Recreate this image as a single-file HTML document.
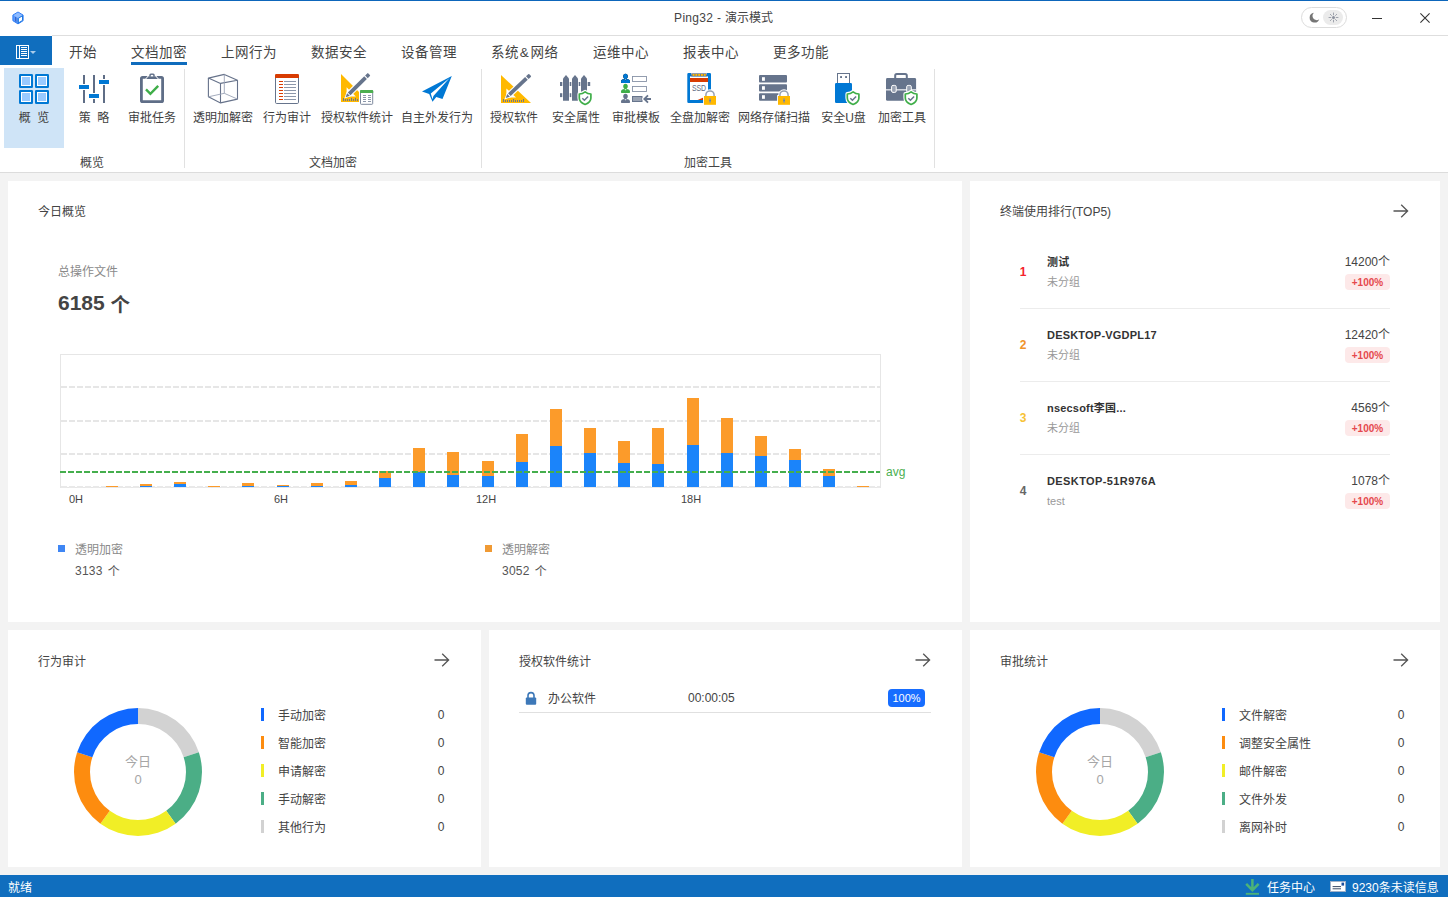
<!DOCTYPE html>
<html lang="zh-CN">
<head>
<meta charset="utf-8">
<title>Ping32 - 演示模式</title>
<style>
*{box-sizing:border-box;margin:0;padding:0}
html,body{width:1448px;height:897px;overflow:hidden}
body{position:relative;background:#f3f3f3;font-family:"Liberation Sans","Noto Sans CJK SC",sans-serif;font-size:12px;color:#444;line-height:16px}
.abs{position:absolute}
.t{position:absolute;white-space:nowrap;line-height:16px;height:16px;margin-top:1px}
.c{text-align:center}
.r{text-align:right}
#titlebar{position:absolute;left:0;top:0;width:1448px;height:36px;background:#fff;border-top:1px solid #0d66bb;border-bottom:1px solid #dedede}
#ribbon{position:absolute;left:0;top:36px;width:1448px;height:137px;background:#fff;border-bottom:1px solid #dcdcdc}
#filebtn{position:absolute;left:0;top:36px;width:52px;height:29px;background:#106ebe}
.tab{position:absolute;top:44px;font-size:13.5px;letter-spacing:0.5px;line-height:18px;height:18px;white-space:nowrap;color:#444}
.sep{position:absolute;top:69px;width:1px;height:99px;background:#e1e1e1}
.rl{position:absolute;top:110px;line-height:16px;height:16px;white-space:nowrap;color:#3f3f3f;text-align:center;width:90px}
.gl{position:absolute;top:155px;line-height:16px;height:16px;white-space:nowrap;color:#444;text-align:center;width:90px}
.ico{position:absolute;overflow:visible}
.panel{position:absolute;background:#fff}
.ph{position:absolute;top:22px;left:30px;line-height:16px;white-space:nowrap;color:#444}
.arrow{position:absolute;top:23px;width:15px;height:14px}
.gray{color:#8a8a8a}
#status{position:absolute;left:0;top:875px;width:1448px;height:22px;background:#106ebe;color:#fff}
.lg{position:absolute;width:3px;height:13px}
.ll{position:absolute;margin-top:2px;line-height:16px;white-space:nowrap;color:#444}
.lv{position:absolute;margin-top:1px;line-height:16px;white-space:nowrap;color:#444;width:20px;text-align:center}
.rank{position:absolute;margin-top:1px;font-weight:bold;font-size:12px;line-height:16px;width:10px;text-align:center}
.nm{position:absolute;font-weight:bold;font-size:11px;letter-spacing:0.2px;line-height:14px;white-space:nowrap;color:#333}
.grp{position:absolute;font-size:11px;line-height:14px;white-space:nowrap;color:#999}
.cnt{position:absolute;margin-top:1px;font-size:12px;line-height:16px;white-space:nowrap;color:#444;text-align:right;width:80px}
.bdg{position:absolute;width:45px;height:16px;border-radius:4px;background:#fde9e9;color:#e5484d;font-weight:bold;font-size:10px;line-height:18px;overflow:hidden;text-align:center}
.hr{position:absolute;height:1px;background:#ececec}
</style>
</head>
<body>
<div id="titlebar"></div>
<!-- app icon -->
<svg class="ico" style="left:12px;top:11px" width="12" height="14" viewBox="12 11 12 14">
<path d="M18 12L23.1 15.1V20.7L18 23.9L12.9 20.7V15.1Z" fill="#5b9bff" stroke="#2f7df6" stroke-width="1" stroke-linejoin="round"/>
<path d="M18 12.6L22.4 15.2L18 18L13.6 15.2Z" fill="#8fbcff"/>
<path d="M18.4 18.3L22.5 15.8V20.4L18.4 23Z" fill="#fff" stroke="#0f6fdd" stroke-width="0.9" stroke-linejoin="round"/>
<path d="M15.6 17V21.4" stroke="#3d62c4" stroke-width="1.1"/>
<path d="M17 18V22.4" stroke="#3f7fd8" stroke-width="0.9"/>
</svg>
<div class="t r" style="left:573px;top:9px;width:200px;color:#444"><span style="letter-spacing:0.32px">Ping32 - </span>演示模式</div>
<!-- theme toggle -->
<div class="abs" style="left:1301px;top:7px;width:46px;height:21px;border:1px solid #dcdcdc;border-radius:11px;background:#fff"></div>
<div class="abs" style="left:1323px;top:10px;width:20px;height:15px;border-radius:8px;background:#ebebeb"></div>
<svg class="ico" style="left:1309px;top:12px" width="11" height="11" viewBox="0 0 11 11">
<path d="M5 0.8A4.9 4.9 0 1 0 10.2 7.2A4 4 0 0 1 5 0.8Z" fill="#757575"/>
</svg>
<svg class="ico" style="left:1328px;top:12px" width="11" height="11" viewBox="0 0 11 11">
<circle cx="5.5" cy="5.5" r="1.5" fill="#8a8f9c"/>
<g stroke="#8a8f9c" stroke-width="0.8" stroke-linecap="round">
<path d="M5.5 1V2.8M5.5 8.2V10M1 5.5H2.8M8.2 5.5H10M2.3 2.3L3.5 3.5M7.5 7.5L8.7 8.7M2.3 8.7L3.5 7.5M7.5 3.5L8.7 2.3"/>
</g>
</svg>
<!-- window controls -->
<div class="abs" style="left:1372px;top:18px;width:10px;height:1px;background:#333"></div>
<svg class="ico" style="left:1420px;top:13px" width="10" height="10" viewBox="0 0 10 10">
<path d="M0.4 0.4L9.6 9.6M9.6 0.4L0.4 9.6" stroke="#333" stroke-width="1.1"/>
</svg>
<div id="ribbon"></div>
<div id="filebtn"></div>
<div class="abs" style="left:0;top:35px;width:52px;height:1px;background:#fff"></div>
<svg class="ico" style="left:15px;top:44px" width="22" height="16" viewBox="15 44 22 16">
<g shape-rendering="crispEdges" fill="#fff">
<rect x="16" y="45" width="13" height="1"/><rect x="16" y="58" width="13" height="1"/><rect x="16" y="45" width="1" height="14"/><rect x="28" y="45" width="1" height="14"/>
<rect x="19" y="45" width="1" height="14"/>
<rect x="21" y="47" width="6" height="1"/><rect x="21" y="49" width="6" height="1"/><rect x="21" y="51" width="6" height="1"/><rect x="21" y="53" width="6" height="1"/><rect x="21" y="55" width="6" height="1"/>
</g>
<path d="M30 51H36L33 54Z" fill="#a9cbea"/>
</svg>
<div class="tab" style="left:69px">开始</div>
<div class="tab" style="left:131px">文档加密</div>
<div class="abs" style="left:131px;top:62px;width:56px;height:3px;background:#0f6cbd"></div>
<div class="tab" style="left:221px">上网行为</div>
<div class="tab" style="left:311px">数据安全</div>
<div class="tab" style="left:401px">设备管理</div>
<div class="tab" style="left:491px">系统<span style="margin:0 1.3px 0 0.8px">&amp;</span>网络</div>
<div class="tab" style="left:593px">运维中心</div>
<div class="tab" style="left:683px">报表中心</div>
<div class="tab" style="left:773px">更多功能</div>
<div class="abs" style="left:4px;top:68px;width:60px;height:80px;background:#cfe4f7"></div>
<div class="sep" style="left:184px"></div>
<div class="sep" style="left:481px"></div>
<div class="sep" style="left:934px"></div>
<div class="rl" style="left:-11px">概&nbsp;&nbsp;览</div>
<div class="rl" style="left:49px">策&nbsp;&nbsp;略</div>
<div class="rl" style="left:107px">审批任务</div>
<div class="rl" style="left:178px">透明加解密</div>
<div class="rl" style="left:242px">行为审计</div>
<div class="rl" style="left:312px">授权软件统计</div>
<div class="rl" style="left:392px">自主外发行为</div>
<div class="rl" style="left:469px">授权软件</div>
<div class="rl" style="left:531px">安全属性</div>
<div class="rl" style="left:591px">审批模板</div>
<div class="rl" style="left:655px">全盘加解密</div>
<div class="rl" style="left:729px">网络存储扫描</div>
<div class="rl" style="left:798.5px">安全U盘</div>
<div class="rl" style="left:857px">加密工具</div>
<div class="gl" style="left:47px">概览</div>
<div class="gl" style="left:288px">文档加密</div>
<div class="gl" style="left:663px">加密工具</div>
<svg class="ico" style="left:0;top:0" width="1448" height="180" viewBox="0 0 1448 180">
<defs>
<g id="shield">
<path d="M7 0.7C5.4 2.1 3.2 2.9 1.1 3V7.2C1.1 10.4 3.8 12.6 7 13.8C10.2 12.6 12.9 10.4 12.9 7.2V3C10.8 2.9 8.6 2.1 7 0.7Z" fill="#fff" stroke="#fff" stroke-width="3.6" stroke-linejoin="round"/>
<path d="M7 0.9C5.4 2.2 3.2 3 1.2 3.1V7.2C1.2 10.3 3.9 12.5 7 13.6C10.1 12.5 12.8 10.3 12.8 7.2V3.1C10.8 3 8.6 2.2 7 0.9Z" fill="#fff" stroke="#3fae49" stroke-width="1.7" stroke-linejoin="round"/>
<path d="M4.2 7.3L6.3 9.3L10 5.5" fill="none" stroke="#66748c" stroke-width="1.5"/>
</g>
<g id="lock">
<path d="M1.9 7V5A4.1 4.1 0 0 1 10.1 5V7Z" fill="#fff" stroke="#fff" stroke-width="3.4"/>
<rect x="-0.9" y="5.1" width="13.8" height="10.6" fill="#fff"/>
<path d="M1.9 7V5A4.1 4.1 0 0 1 10.1 5V7" fill="#fff" stroke="#98a2b3" stroke-width="1.5"/>
<rect x="0" y="6" width="12" height="8.8" fill="#ffb900"/>
<rect x="5.3" y="8.4" width="1.5" height="4.2" fill="#8a8fa6"/>
<rect x="5.6" y="10" width="0.9" height="1.1" fill="#2a6fd0"/>
</g>
</defs>

<!-- 概览 grid -->
<g>
<rect x="20" y="75" width="12" height="12" fill="#fff" stroke="#0078d4" stroke-width="2" rx="0.2"/><rect x="22" y="77" width="8" height="8" fill="#99caff"/>
<rect x="36" y="75" width="12" height="12" fill="#fff" stroke="#0078d4" stroke-width="2" rx="0.2"/><rect x="38" y="77" width="8" height="8" fill="#99caff"/>
<rect x="20" y="91" width="12" height="12" fill="#fff" stroke="#0078d4" stroke-width="2" rx="0.2"/><rect x="22" y="93" width="8" height="8" fill="#99caff"/>
<rect x="36" y="91" width="12" height="12" fill="#fff" stroke="#0078d4" stroke-width="2" rx="0.2"/><rect x="38" y="93" width="8" height="8" fill="#99caff"/>
</g>

<!-- 策略 sliders -->
<g shape-rendering="crispEdges">
<rect x="83" y="75" width="2" height="9" fill="#5f6d86"/><rect x="83" y="90" width="2" height="13" fill="#5f6d86"/>
<rect x="93" y="75" width="2" height="18" fill="#5f6d86"/><rect x="93" y="99" width="2" height="4" fill="#5f6d86"/>
<rect x="103" y="75" width="2" height="4" fill="#5f6d86"/><rect x="103" y="85" width="2" height="18" fill="#5f6d86"/>
<rect x="79" y="85" width="10" height="4" fill="#0078d4"/>
<rect x="89" y="94" width="10" height="4" fill="#0078d4"/>
<rect x="99" y="80" width="10" height="4" fill="#0078d4"/>
</g>

<!-- 审批任务 clipboard -->
<g>
<rect x="141.4" y="77.4" width="21.2" height="24.2" rx="1.2" fill="#fff" stroke="#5f6e87" stroke-width="2.8"/>
<path d="M145 79.2L148 75.6H156L159 79.2Z" fill="#fff"/>
<path d="M146.1 78.9L148.6 76.2H155.4L157.9 78.9Z" fill="#5f6e87"/>
<path d="M149.3 76.6V75.1a1.5 1.5 0 0 1 1.5-1.5h2.4a1.5 1.5 0 0 1 1.5 1.5V76.6Z" fill="#5f6e87"/>
<rect x="150.8" y="74.9" width="2.4" height="1.5" fill="#fff"/>
<path d="M146 89.4L150.4 93.8L158.2 85.9" fill="none" stroke="#3fae49" stroke-width="2.4"/>
</g>

<!-- 透明加解密 cube -->
<g fill="none" stroke="#66728a" stroke-width="1.1" stroke-linejoin="round">
<path d="M224.3 74.4L208.4 78.1L220.5 83.4L237.5 80.3Z"/>
<path d="M208.4 78.1V96.8L220.5 102.9L237.5 99.1V80.3"/>
<path d="M220.5 83.4V102.9"/>
<path d="M224.3 74.4V93.3M208.4 96.8L224.3 93.3L237.5 99.1" stroke="#9aa3b5" stroke-width="0.9"/>
</g>

<!-- 行为审计 doc -->
<g>
<rect x="275.5" y="74.5" width="23" height="29" rx="1.2" fill="#fff" stroke="#66748c" stroke-width="1"/>
<path d="M275 75.4a1.4 1.4 0 0 1 1.4-1.4h21.2a1.4 1.4 0 0 1 1.4 1.4V78H275Z" fill="#d83b01"/>
<g shape-rendering="crispEdges">
<path d="M278.5 81.5h4M278.5 84.5h4M278.5 87.5h4M278.5 90.5h4M278.5 93.5h4M278.5 96.5h4M278.5 99.5h4" stroke="#d83b01" stroke-width="1"/>
<path d="M284 81.5h11.5M284 84.5h11.5M284 87.5h11.5M284 90.5h11.5M284 93.5h11.5M284 96.5h11.5M284 99.5h11.5" stroke="#8c97aa" stroke-width="1"/>
</g>
</g>

<!-- 授权软件统计 -->
<g>
<path d="M341 74V102H369Z" fill="#ffb900"/>
<path d="M346.6 87.2V96.4H355.8Z" fill="#fff"/>
<g fill="#6d7890" shape-rendering="crispEdges"><rect x="343" y="98" width="1" height="3"/><rect x="345" y="99" width="1" height="2"/><rect x="347" y="99" width="1" height="2"/><rect x="349" y="99" width="1" height="2"/><rect x="351" y="98" width="1" height="3"/><rect x="353" y="99" width="1" height="2"/><rect x="355" y="98" width="1" height="3"/><rect x="357" y="99" width="1" height="2"/></g>
<g transform="translate(345.6 97.3) rotate(-44.5)">
<path d="M0 0L4.6 -2.2H32.6V2.2H4.6Z" fill="#fff" stroke="#fff" stroke-width="1.6"/>
<path d="M0 0L4 -1.9L4 1.9Z" fill="#66748c"/>
<path d="M5 -1.9H28V1.9H5Z" fill="#66748c"/>
<path d="M29.2 -1.9H32.2a0.8 0.8 0 0 1 0.8 0.8V1.1a0.8 0.8 0 0 1 -0.8 0.8H29.2Z" fill="#66748c"/>
</g>
<rect x="359" y="89" width="15.2" height="16.8" fill="#fff"/>
<rect x="360.5" y="90.5" width="12.2" height="13.8" rx="0.8" fill="#fff" stroke="#7d899d" stroke-width="1"/>
<path d="M360 91a1 1 0 0 1 1-1h11.2a1 1 0 0 1 1 1V93H360Z" fill="#4caf50"/>
<g shape-rendering="crispEdges"><path d="M363 95.5h3M367.5 95.5h3M363 97.5h3M367.5 97.5h3M363 99.5h3M367.5 99.5h3M363 101.5h3M367.5 101.5h3" stroke="#8c97aa" stroke-width="1"/></g>
</g>

<!-- 自主外发行为 plane -->
<path fill="#0078d4" fill-rule="evenodd" d="M451.8 76.1L422 91.5L429.2 93.9L432.5 101.7L436.3 97.1L442.5 98.9ZM430.8 93.6L449.6 78.1L433.4 96L432.5 99.3Z"/>

<!-- 授权软件 -->
<g>
<path d="M501 75V103H531Z" fill="#ffb900"/>
<path d="M506.4 88.4V97.6H516Z" fill="#fff"/>
<g fill="#6d7890" shape-rendering="crispEdges"><rect x="503" y="99" width="1" height="3"/><rect x="505" y="100" width="1" height="2"/><rect x="507" y="100" width="1" height="2"/><rect x="509" y="100" width="1" height="2"/><rect x="511" y="100" width="1" height="2"/><rect x="513" y="99" width="1" height="3"/><rect x="515" y="100" width="1" height="2"/><rect x="517" y="100" width="1" height="2"/><rect x="519" y="100" width="1" height="2"/><rect x="521" y="100" width="1" height="2"/><rect x="523" y="99" width="1" height="3"/></g>
<g transform="translate(505.7 98.1) rotate(-43.5)">
<path d="M0 0L4.6 -2.2H33.4V2.2H4.6Z" fill="#fff" stroke="#fff" stroke-width="1.6"/>
<path d="M0 0L4 -1.9L4 1.9Z" fill="#66748c"/>
<path d="M5 -1.9H28.6V1.9H5Z" fill="#66748c"/>
<path d="M29.8 -1.9H32.8a0.8 0.8 0 0 1 0.8 0.8V1.1a0.8 0.8 0 0 1 -0.8 0.8H29.8Z" fill="#66748c"/>
</g>
</g>

<!-- 安全属性 fence -->
<g fill="#66748c">
<rect x="560" y="82" width="2.3" height="4"/><rect x="569.7" y="82" width="1.6" height="4"/><rect x="578.7" y="82" width="1.6" height="4"/><rect x="587.7" y="82" width="2.5" height="4"/>
<rect x="560" y="93.2" width="2.3" height="3.9"/><rect x="569.7" y="93.2" width="1.6" height="3.9"/><rect x="578.7" y="93.2" width="1.6" height="3.9"/><rect x="587.7" y="93.2" width="2.5" height="3.9"/>
<path d="M563 78.4L566 74.9L569 78.4V100.8H563Z"/>
<path d="M572 78.4L575 74.9L578 78.4V100.8H572Z"/>
<path d="M581 78.4L584 74.9L587 78.4V100.8H581Z"/>
</g>
<use href="#shield" x="578.1" y="90.9"/>

<!-- 审批模板 -->
<g>
<g id="person">
<path d="M625.5 73.8c1.4 0 2.3 1 2.3 2.4c0 1.1 -0.5 2 -1.1 2.5v0.6h-2.4v-0.6c-0.6 -0.5 -1.1 -1.4 -1.1 -2.5c0 -1.4 0.9 -2.4 2.3 -2.4Z"/>
<path d="M621 82.2V81.4C621 79.8 622.4 79.2 624.4 78.9L625.5 80.4L626.6 78.9C628.6 79.2 630 79.8 630 81.4V82.2a0.7 0.7 0 0 1 -0.7 0.7H621.7a0.7 0.7 0 0 1 -0.7 -0.7Z"/>
</g>
</g>
<use href="#person" fill="#0078d4"/>
<use href="#person" y="10" fill="#3fae49"/>
<use href="#person" y="20" fill="#66748c"/>
<rect x="632.5" y="76.5" width="14" height="5" fill="#fff" stroke="#8893a7" stroke-width="0.9"/>
<rect x="632.5" y="86.5" width="14" height="5" fill="#fff" stroke="#8893a7" stroke-width="0.9"/>
<rect x="632.5" y="96.5" width="9.5" height="5" fill="#9aa3b3" stroke="#66748c" stroke-width="1"/>
<path d="M644.4 99H651M648 95.4L644.3 99L648 102.6" fill="none" stroke="#fff" stroke-width="3.6"/><path d="M644.4 99H651M648 95.4L644.3 99L648 102.6" fill="none" stroke="#66748c" stroke-width="1.8"/>

<!-- 全盘加解密 SSD -->
<g>
<path d="M687.3 74.2a1.2 1.2 0 0 1 1.2 -1.2H691V75H707V73H709.8a1.2 1.2 0 0 1 1.2 1.2V101.7a1.2 1.2 0 0 1 -1.2 1.2H688.5a1.2 1.2 0 0 1 -1.2 -1.2Z" fill="#0078d4"/>
<rect x="690" y="76.4" width="18" height="23.6" fill="#fff"/>
<rect x="691.2" y="73.3" width="15.6" height="3.1" fill="#66748c"/>
<g fill="#ffb900"><rect x="692.6" y="74" width="1.9" height="1.9"/><rect x="695.4" y="74" width="1.9" height="1.9"/><rect x="698.2" y="74" width="1.9" height="1.9"/><rect x="701" y="74" width="1.9" height="1.9"/><rect x="703.8" y="74" width="1.9" height="1.9"/></g>
<rect x="690" y="78" width="18" height="4" fill="#d83b01"/>
<path d="M697.6 100L703.4 97.4V100Z" fill="#d83b01"/>
<text x="699" y="90.9" font-family="'Liberation Sans',sans-serif" font-size="8.2" text-anchor="middle" fill="#5d6a82" textLength="14.2" lengthAdjust="spacingAndGlyphs">SSD</text>
</g>
<use href="#lock" x="704" y="90"/>

<!-- 网络存储扫描 server -->
<g fill="#66748c">
<rect x="759" y="75.1" width="28" height="7.5" rx="1"/>
<rect x="759" y="84.2" width="28" height="7.4" rx="1"/>
<rect x="759" y="93.2" width="28" height="7.6" rx="1"/>
<g fill="#fff"><rect x="762" y="77.2" width="2.9" height="3.6"/><rect x="762" y="86.2" width="2.9" height="3.6"/><rect x="762" y="95.2" width="2.9" height="3.6"/></g>
</g>
<use href="#lock" x="778" y="90"/>

<!-- 安全U盘 -->
<g>
<rect x="837.5" y="73.5" width="12" height="10" fill="#fff" stroke="#66748c" stroke-width="1"/>
<rect x="840.1" y="76.1" width="1.9" height="1.9" fill="#66748c"/><rect x="845.1" y="76.1" width="1.9" height="1.9" fill="#66748c"/>
<rect x="835" y="83" width="17" height="19.9" rx="1.2" fill="#0078d4"/>
</g>
<use href="#shield" x="846.1" y="90.9"/>

<!-- 加密工具 briefcase -->
<g>
<rect x="895.2" y="74" width="11.6" height="6" rx="1.6" fill="none" stroke="#66748c" stroke-width="2"/>
<rect x="886" y="78" width="30.1" height="22.8" rx="1.4" fill="#66748c"/>
<rect x="886" y="89.3" width="30.1" height="1.1" fill="#fff"/>
<rect x="891.6" y="85.4" width="4.6" height="7" rx="1.4" fill="#9aa3b3" stroke="#fff" stroke-width="1"/>
<rect x="906.7" y="85.4" width="4.6" height="7" rx="1.4" fill="#9aa3b3" stroke="#fff" stroke-width="1"/>
</g>
<use href="#shield" x="904.1" y="90.9"/>
</svg>
<!-- Panel A -->
<div class="panel" style="left:8px;top:181px;width:954px;height:441px">
<svg class="ico" style="left:0;top:0" width="954" height="441" viewBox="8 181 954 441" shape-rendering="crispEdges">
<rect x="60.5" y="354.5" width="820" height="133" fill="none" stroke="#e6e6e6" stroke-width="1"/>
<line x1="61" x2="880" y1="387" y2="387" stroke="#e6e6e6" stroke-width="2" stroke-dasharray="6 2"/>
<line x1="61" x2="880" y1="421" y2="421" stroke="#e6e6e6" stroke-width="2" stroke-dasharray="6 2"/>
<line x1="61" x2="880" y1="454" y2="454" stroke="#e6e6e6" stroke-width="2" stroke-dasharray="6 2"/>
<line x1="61" x2="880" y1="487" y2="487" stroke="#e9e9e9" stroke-width="2" stroke-dasharray="6 2"/>
<rect x="106" y="486" width="12" height="1" fill="#fc9b2a"/>
<rect x="140" y="486" width="12" height="1" fill="#1b84fa"/>
<rect x="140" y="484" width="12" height="2" fill="#fc9b2a"/>
<rect x="174" y="484" width="12" height="3" fill="#1b84fa"/>
<rect x="174" y="482" width="12" height="2" fill="#fc9b2a"/>
<rect x="208" y="486" width="12" height="1" fill="#fc9b2a"/>
<rect x="242" y="486" width="12" height="1" fill="#1b84fa"/>
<rect x="242" y="483" width="12" height="3" fill="#fc9b2a"/>
<rect x="277" y="486" width="12" height="1" fill="#1b84fa"/>
<rect x="277" y="485" width="12" height="1" fill="#fc9b2a"/>
<rect x="311" y="486" width="12" height="1" fill="#1b84fa"/>
<rect x="311" y="483" width="12" height="3" fill="#fc9b2a"/>
<rect x="345" y="485" width="12" height="2" fill="#1b84fa"/>
<rect x="345" y="481" width="12" height="4" fill="#fc9b2a"/>
<rect x="379" y="478" width="12" height="9" fill="#1b84fa"/>
<rect x="379" y="471" width="12" height="7" fill="#fc9b2a"/>
<rect x="413" y="472" width="12" height="15" fill="#1b84fa"/>
<rect x="413" y="448" width="12" height="24" fill="#fc9b2a"/>
<rect x="447" y="475" width="12" height="12" fill="#1b84fa"/>
<rect x="447" y="452" width="12" height="23" fill="#fc9b2a"/>
<rect x="482" y="476" width="12" height="11" fill="#1b84fa"/>
<rect x="482" y="461" width="12" height="15" fill="#fc9b2a"/>
<rect x="516" y="462" width="12" height="25" fill="#1b84fa"/>
<rect x="516" y="434" width="12" height="28" fill="#fc9b2a"/>
<rect x="550" y="446" width="12" height="41" fill="#1b84fa"/>
<rect x="550" y="409" width="12" height="37" fill="#fc9b2a"/>
<rect x="584" y="453" width="12" height="34" fill="#1b84fa"/>
<rect x="584" y="428" width="12" height="25" fill="#fc9b2a"/>
<rect x="618" y="463" width="12" height="24" fill="#1b84fa"/>
<rect x="618" y="441" width="12" height="22" fill="#fc9b2a"/>
<rect x="652" y="464" width="12" height="23" fill="#1b84fa"/>
<rect x="652" y="428" width="12" height="36" fill="#fc9b2a"/>
<rect x="687" y="445" width="12" height="42" fill="#1b84fa"/>
<rect x="687" y="398" width="12" height="47" fill="#fc9b2a"/>
<rect x="721" y="453" width="12" height="34" fill="#1b84fa"/>
<rect x="721" y="418" width="12" height="35" fill="#fc9b2a"/>
<rect x="755" y="456" width="12" height="31" fill="#1b84fa"/>
<rect x="755" y="436" width="12" height="20" fill="#fc9b2a"/>
<rect x="789" y="460" width="12" height="27" fill="#1b84fa"/>
<rect x="789" y="449" width="12" height="11" fill="#fc9b2a"/>
<rect x="823" y="476" width="12" height="11" fill="#1b84fa"/>
<rect x="823" y="469" width="12" height="7" fill="#fc9b2a"/>
<rect x="857" y="486" width="12" height="1" fill="#fc9b2a"/>
<line x1="60" x2="880" y1="472" y2="472" stroke="#45ae4d" stroke-width="2" stroke-dasharray="6 2"/>
</svg>
</div>
<div class="t" style="left:38px;top:203px">今日概览</div>
<div class="t gray" style="left:58px;top:263px">总操作文件</div>
<div class="t" style="left:58px;top:289px;font-size:21px;font-weight:bold;line-height:26px;height:26px;color:#444">6185 <span style="position:relative;top:2px;font-size:19.5px">个</span></div>
<div class="t c" style="left:56px;top:490px;width:40px;font-size:11px;color:#444">0H</div>
<div class="t c" style="left:261px;top:490px;width:40px;font-size:11px;color:#444">6H</div>
<div class="t c" style="left:466px;top:490px;width:40px;font-size:11px;color:#444">12H</div>
<div class="t c" style="left:671px;top:490px;width:40px;font-size:11px;color:#444">18H</div>
<div class="t" style="left:886px;top:463px;color:#4caf50">avg</div>
<div class="abs" style="left:58px;top:545px;width:7px;height:7px;background:#3f86f4"></div>
<div class="t gray" style="left:75px;top:541px">透明加密</div>
<div class="t" style="left:75px;top:562px;color:#555;letter-spacing:0.25px;word-spacing:1.5px">3133 <span style="position:relative;top:1px">个</span></div>
<div class="abs" style="left:485px;top:545px;width:7px;height:7px;background:#f09a34"></div>
<div class="t gray" style="left:502px;top:541px">透明解密</div>
<div class="t" style="left:502px;top:562px;color:#555;letter-spacing:0.25px;word-spacing:1.5px">3052 <span style="position:relative;top:1px">个</span></div>
<!-- Panel B -->
<div class="panel" style="left:970px;top:181px;width:470px;height:441px"></div>
<div class="t" style="left:1000px;top:203px">终端使用排行(TOP5)</div>
<svg class="ico" style="left:1393px;top:204px" width="16" height="14" viewBox="0 0 16 14"><path d="M0.5 7H14.5M8.2 0.8L14.6 7L8.2 13.2" fill="none" stroke="#555" stroke-width="1.3"/></svg>

<div class="rank" style="left:1018px;top:263px;color:#f5222d">1</div>
<div class="nm" style="left:1047px;top:255px">测试</div>
<div class="grp" style="left:1047px;top:275px">未分组</div>
<div class="cnt" style="left:1310px;top:253px">14200个</div>
<div class="bdg" style="left:1345px;top:274px">+100%</div>
<div class="hr" style="left:1020px;top:308px;width:370px"></div>

<div class="rank" style="left:1018px;top:336px;color:#f0932b">2</div>
<div class="nm" style="left:1047px;top:328px">DESKTOP-VGDPL17</div>
<div class="grp" style="left:1047px;top:348px">未分组</div>
<div class="cnt" style="left:1310px;top:326px">12420个</div>
<div class="bdg" style="left:1345px;top:347px">+100%</div>
<div class="hr" style="left:1020px;top:381px;width:370px"></div>

<div class="rank" style="left:1018px;top:409px;color:#f7c236">3</div>
<div class="nm" style="left:1047px;top:401px">nsecsoft李国...</div>
<div class="grp" style="left:1047px;top:421px">未分组</div>
<div class="cnt" style="left:1310px;top:399px">4569个</div>
<div class="bdg" style="left:1345px;top:420px">+100%</div>
<div class="hr" style="left:1020px;top:454px;width:370px"></div>

<div class="rank" style="left:1018px;top:482px;color:#666">4</div>
<div class="nm" style="left:1047px;top:474px;letter-spacing:0.4px">DESKTOP-51R976A</div>
<div class="grp" style="left:1047px;top:494px">test</div>
<div class="cnt" style="left:1310px;top:472px">1078个</div>
<div class="bdg" style="left:1345px;top:493px">+100%</div>
<!-- Panel C -->
<div class="panel" style="left:8px;top:630px;width:473px;height:237px"></div>
<div class="t" style="left:38px;top:653px">行为审计</div>
<svg class="ico" style="left:434px;top:653px" width="16" height="14" viewBox="0 0 16 14"><path d="M0.5 7H14.5M8.2 0.8L14.6 7L8.2 13.2" fill="none" stroke="#555" stroke-width="1.3"/></svg>
<svg class="ico" style="left:72.7px;top:706.6px" width="130" height="130" viewBox="-65 -65 130 130">
<path d="M0.00 -64.00A64 64 0 0 1 60.87 -19.78L45.65 -14.83A48 48 0 0 0 0.00 -48.00Z" fill="#d2d2d2"/>
<path d="M60.87 -19.78A64 64 0 0 1 37.62 51.78L28.21 38.83A48 48 0 0 0 45.65 -14.83Z" fill="#4bae86"/>
<path d="M37.62 51.78A64 64 0 0 1 -37.62 51.78L-28.21 38.83A48 48 0 0 0 28.21 38.83Z" fill="#f1ee26"/>
<path d="M-37.62 51.78A64 64 0 0 1 -60.87 -19.78L-45.65 -14.83A48 48 0 0 0 -28.21 38.83Z" fill="#fd8c0f"/>
<path d="M-60.87 -19.78A64 64 0 0 1 -0.00 -64.00L-0.00 -48.00A48 48 0 0 0 -45.65 -14.83Z" fill="#1068ff"/>
</svg>
<div class="t c" style="left:108px;top:753px;width:60px;font-size:13px;color:#a6a6a6">今日</div>
<div class="t c" style="left:108px;top:771px;width:60px;font-size:13px;color:#a6a6a6">0</div>
<div class="lg" style="left:261px;top:708px;background:#1068ff"></div><div class="ll" style="left:278px;top:706px">手动加密</div><div class="lv" style="left:431px;top:706px">0</div>
<div class="lg" style="left:261px;top:736px;background:#fd8c0f"></div><div class="ll" style="left:278px;top:734px">智能加密</div><div class="lv" style="left:431px;top:734px">0</div>
<div class="lg" style="left:261px;top:764px;background:#f1ee26"></div><div class="ll" style="left:278px;top:762px">申请解密</div><div class="lv" style="left:431px;top:762px">0</div>
<div class="lg" style="left:261px;top:792px;background:#4bae86"></div><div class="ll" style="left:278px;top:790px">手动解密</div><div class="lv" style="left:431px;top:790px">0</div>
<div class="lg" style="left:261px;top:820px;background:#d2d2d2"></div><div class="ll" style="left:278px;top:818px">其他行为</div><div class="lv" style="left:431px;top:818px">0</div>

<!-- Panel D -->
<div class="panel" style="left:489px;top:630px;width:473px;height:237px"></div>
<div class="t" style="left:519px;top:653px">授权软件统计</div>
<svg class="ico" style="left:915px;top:653px" width="16" height="14" viewBox="0 0 16 14"><path d="M0.5 7H14.5M8.2 0.8L14.6 7L8.2 13.2" fill="none" stroke="#555" stroke-width="1.3"/></svg>
<svg class="ico" style="left:525px;top:691px" width="12" height="14" viewBox="0 0 12 14">
<path d="M3 7V4.6A3 3 0 0 1 9 4.6V7" fill="none" stroke="#3d78b8" stroke-width="1.6"/>
<rect x="0.8" y="6.6" width="10.4" height="7.2" rx="1" fill="#3d78b8"/>
</svg>
<div class="t" style="left:548px;top:690px">办公软件</div>
<div class="t" style="left:688px;top:689px">00:00:05</div>
<div class="abs c" style="left:888px;top:689px;width:37px;height:18px;border-radius:4px;background:#176dff;color:#fff;font-size:11px;line-height:18px">100%</div>
<div class="hr" style="left:519px;top:712px;width:412px;background:#e0e0e0"></div>

<!-- Panel E -->
<div class="panel" style="left:970px;top:630px;width:470px;height:237px"></div>
<div class="t" style="left:1000px;top:653px">审批统计</div>
<svg class="ico" style="left:1393px;top:653px" width="16" height="14" viewBox="0 0 16 14"><path d="M0.5 7H14.5M8.2 0.8L14.6 7L8.2 13.2" fill="none" stroke="#555" stroke-width="1.3"/></svg>
<svg class="ico" style="left:1035.4px;top:706.6px" width="130" height="130" viewBox="-65 -65 130 130">
<path d="M0.00 -64.00A64 64 0 0 1 60.87 -19.78L45.65 -14.83A48 48 0 0 0 0.00 -48.00Z" fill="#d2d2d2"/>
<path d="M60.87 -19.78A64 64 0 0 1 37.62 51.78L28.21 38.83A48 48 0 0 0 45.65 -14.83Z" fill="#4bae86"/>
<path d="M37.62 51.78A64 64 0 0 1 -37.62 51.78L-28.21 38.83A48 48 0 0 0 28.21 38.83Z" fill="#f1ee26"/>
<path d="M-37.62 51.78A64 64 0 0 1 -60.87 -19.78L-45.65 -14.83A48 48 0 0 0 -28.21 38.83Z" fill="#fd8c0f"/>
<path d="M-60.87 -19.78A64 64 0 0 1 -0.00 -64.00L-0.00 -48.00A48 48 0 0 0 -45.65 -14.83Z" fill="#1068ff"/>
</svg>
<div class="t c" style="left:1070px;top:753px;width:60px;font-size:13px;color:#a6a6a6">今日</div>
<div class="t c" style="left:1070px;top:771px;width:60px;font-size:13px;color:#a6a6a6">0</div>
<div class="lg" style="left:1222px;top:708px;background:#1068ff"></div><div class="ll" style="left:1239px;top:706px">文件解密</div><div class="lv" style="left:1391px;top:706px">0</div>
<div class="lg" style="left:1222px;top:736px;background:#fd8c0f"></div><div class="ll" style="left:1239px;top:734px">调整安全属性</div><div class="lv" style="left:1391px;top:734px">0</div>
<div class="lg" style="left:1222px;top:764px;background:#f1ee26"></div><div class="ll" style="left:1239px;top:762px">邮件解密</div><div class="lv" style="left:1391px;top:762px">0</div>
<div class="lg" style="left:1222px;top:792px;background:#4bae86"></div><div class="ll" style="left:1239px;top:790px">文件外发</div><div class="lv" style="left:1391px;top:790px">0</div>
<div class="lg" style="left:1222px;top:820px;background:#d2d2d2"></div><div class="ll" style="left:1239px;top:818px">离网补时</div><div class="lv" style="left:1391px;top:818px">0</div>

<!-- Status bar -->
<div id="status"></div>
<div class="t" style="left:8px;top:879px;color:#fff">就绪</div>
<svg class="ico" style="left:1245px;top:879px" width="15" height="16" viewBox="0 0 15 16">
<path d="M7.4 0V11M1.2 4.8L7.4 11.2L13.6 4.8" fill="none" stroke="#4cb278" stroke-width="2.5"/>
<path d="M0.8 14.8H14" stroke="#4cb278" stroke-width="1.9"/>
</svg>
<div class="t" style="left:1267px;top:879px;color:#fff">任务中心</div>
<svg class="ico" style="left:1330px;top:881px" width="16" height="11" viewBox="0 0 16 11">
<rect x="0.5" y="0.5" width="15" height="10" fill="#fff" stroke="#9fb0c8" stroke-width="1"/>
<rect x="11.5" y="1.6" width="2.6" height="3" fill="#1c4f9c"/>
<path d="M2.6 5.6H11M2.6 7.8H11" stroke="#3a4a66" stroke-width="1"/>
</svg>
<div class="t" style="left:1352px;top:879px;color:#fff">9230条未读信息</div>
</body>
</html>
